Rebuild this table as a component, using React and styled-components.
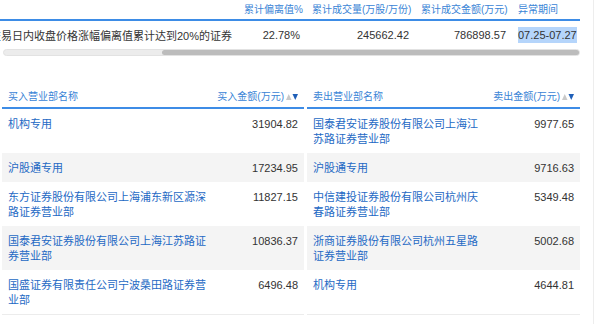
import React from "react";
import styled, { createGlobalStyle } from "styled-components";

const Global = createGlobalStyle`
  html, body { margin: 0; padding: 0; background: #fff; }
  body { font-family: "Liberation Sans", "Noto Sans CJK SC", sans-serif; }
`;

const Page = styled.div`
  width: 594px;
  min-height: 324px;
  border-right: 1px solid #ededed;
  box-sizing: border-box;
`;

const TopTable = styled.div`
  width: 580px;
  display: grid;
  grid-template-columns: 238px 68px 109px 97px 68px;
`;

const TopHead = styled.div`
  height: 19px;
  line-height: 19px;
  font-size: 10px;
  color: #3a84d6;
  border-bottom: 2px solid #3d8ce6;
  padding: 0 6px;
  text-align: ${(p) => p.$align || "right"};
  white-space: nowrap;
`;

const TopCell = styled.div`
  height: 27px;
  display: flex;
  align-items: center;
  justify-content: ${(p) => (p.$align === "left" ? "flex-start" : "flex-end")};
  padding: 0 6px;
  font-size: 11px;
  color: #333;
  white-space: nowrap;
  overflow: hidden;
`;

const Selected = styled.span`
  background: #b5d5fb;
  padding: 2px 0;
`;

const Track = styled.div`
  margin: 1px 0 0 3px;
  width: 577px;
  height: 7px;
  box-sizing: border-box;
  border-radius: 4px;
  background: #ececec;
  border: 1px solid #e2e2e2;
  display: flex;
  justify-content: flex-end;
`;

const Thumb = styled.div`
  width: 417px;
  height: 100%;
  border-radius: 4px;
  background: #bcbcbc;
`;

const Lists = styled.div`
  margin-top: 31px;
  padding-left: 2px;
  display: flex;
  flex-direction: column;
`;

const Row = styled.div`
  display: flex;
  gap: 3px;
  align-items: stretch;
`;

const Half = styled.div`
  display: grid;
  grid-template-columns: ${(p) => p.$cols};
  background: ${(p) => (p.$striped ? "#f4f4f4" : "#fff")};
  border-bottom: ${(p) => (p.$head ? "2px solid #3d8ce6" : p.$last ? "1px solid #ececec" : "none")};
`;

const HeadCell = styled.div`
  height: 20px;
  line-height: 20px;
  font-size: 10px;
  color: #3a84d6;
  padding: 0 6px;
  white-space: nowrap;
  display: flex;
  align-items: center;
  justify-content: ${(p) => (p.$right ? "flex-end" : "flex-start")};
  gap: 2px;
`;

const SortSvg = styled.svg`
  flex-shrink: 0;
`;

const NameCell = styled.div`
  padding: 8px 6px 6px;
  font-size: 11px;
  line-height: 15px;
  color: #2469c4;
`;

const AmountCell = styled.div`
  padding: 8px 6px 6px;
  font-size: 11px;
  line-height: 15px;
  color: #333;
  text-align: right;
`;

const SortIcon = () => (
  <SortSvg width="12" height="6" viewBox="0 0 12 6">
    <polygon points="0,6 2.75,0 5.5,6" fill="#c9c9c9" />
    <polygon points="6.5,0 12,0 9.25,6" fill="#1f5fb8" />
  </SortSvg>
);

const LEFT = "217px 85px";
const RIGHT = "182px 91px";

const rows = [
  ["机构专用", "31904.82", "国泰君安证券股份有限公司上海江苏路证券营业部", "9977.65"],
  ["沪股通专用", "17234.95", "沪股通专用", "9716.63"],
  ["东方证券股份有限公司上海浦东新区源深路证券营业部", "11827.15", "中信建投证券股份有限公司杭州庆春路证券营业部", "5349.48"],
  ["国泰君安证券股份有限公司上海江苏路证券营业部", "10836.37", "浙商证券股份有限公司杭州五星路证券营业部", "5002.68"],
  ["国盛证券有限责任公司宁波桑田路证券营业部", "6496.48", "机构专用", "4644.81"],
];

export default function App() {
  return (
    <>
      <Global />
      <Page>
        <TopTable>
          <TopHead />
          <TopHead>累计偏离值%</TopHead>
          <TopHead>累计成交量(万股/万份)</TopHead>
          <TopHead>累计成交金额(万元)</TopHead>
          <TopHead $align="left">异常期间</TopHead>
          <TopCell>连续三个交易日内收盘价格涨幅偏离值累计达到20%的证券</TopCell>
          <TopCell>22.78%</TopCell>
          <TopCell>245662.42</TopCell>
          <TopCell>786898.57</TopCell>
          <TopCell $align="left">
            <Selected>07.25-07.27</Selected>
          </TopCell>
        </TopTable>
        <Track>
          <Thumb />
        </Track>

        <Lists>
          <Row>
            <Half $cols={LEFT} $head>
              <HeadCell>买入营业部名称</HeadCell>
              <HeadCell $right>
                买入金额(万元)
                <SortIcon />
              </HeadCell>
            </Half>
            <Half $cols={RIGHT} $head>
              <HeadCell>卖出营业部名称</HeadCell>
              <HeadCell $right>
                卖出金额(万元)
                <SortIcon />
              </HeadCell>
            </Half>
          </Row>
          {rows.map((r, i) => (
            <Row key={i}>
              <Half $cols={LEFT} $striped={i % 2 === 1} $last={i === rows.length - 1}>
                <NameCell>{r[0]}</NameCell>
                <AmountCell>{r[1]}</AmountCell>
              </Half>
              <Half $cols={RIGHT} $striped={i % 2 === 1} $last={i === rows.length - 1}>
                <NameCell>{r[2]}</NameCell>
                <AmountCell>{r[3]}</AmountCell>
              </Half>
            </Row>
          ))}
        </Lists>
      </Page>
    </>
  );
}
